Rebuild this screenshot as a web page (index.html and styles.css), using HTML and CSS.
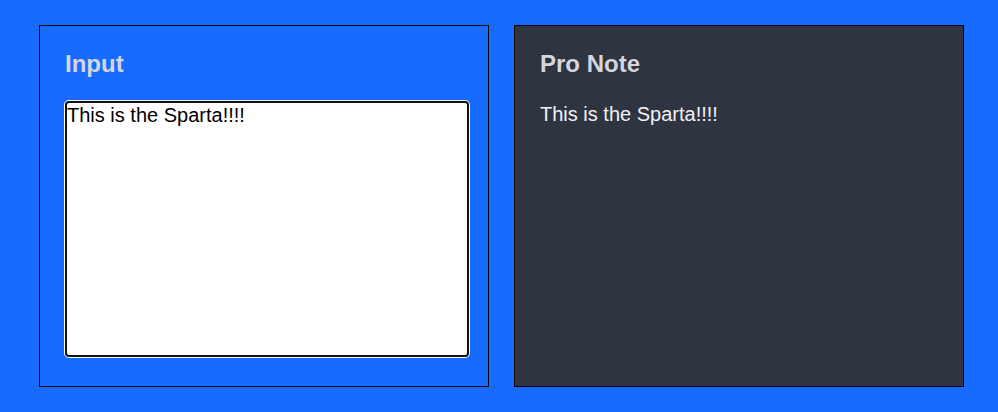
FILE: index.html
```html
<!DOCTYPE html>
<html lang="en">
<head>
<meta charset="utf-8">
<title>Pro Note</title>
<link rel="stylesheet" href="styles.css">
</head>
<body>
<main class="layout">
  <section class="panel panel-input">
    <h2 class="panel-title">Input</h2>
    <textarea class="editor" spellcheck="false">This is the Sparta!!!!</textarea>
  </section>
  <section class="panel panel-output">
    <h2 class="panel-title">Pro Note</h2>
    <p class="note-text">This is the Sparta!!!!</p>
  </section>
</main>
</body>
</html>
```
FILE: styles.css
```css
* { box-sizing: border-box; }
html, body {
  margin: 0;
  height: 100%;
}
body {
  background: #176cff;
  font-family: "Liberation Sans", Arial, sans-serif;
  overflow: hidden;
}
.layout {
  display: grid;
  grid-template-columns: 450px 450px;
  column-gap: 25px;
  padding: 25px 0 25px 39px;
  height: 412px;
}
.panel {
  border: 1px solid #000;
  padding: 24px 24px 24px 25px;
  display: flex;
  flex-direction: column;
  align-items: flex-start;
}
.panel-input { background: #176cff; }
.panel-output { background: #2e3440; }
.panel-title {
  margin: 0 0 23px;
  font-size: 24px;
  font-weight: bold;
  line-height: 27.6px;
  color: #d3d6dd;
}
.editor {
  margin: 0;
  width: 404px;
  height: 256px;
  border: 2px solid #111;
  border-radius: 4px;
  box-shadow: 0 0 0 1px #fff;
  background: #fff;
  padding: 1px 0 0;
  font-family: "Liberation Sans", Arial, sans-serif;
  font-size: 20px;
  line-height: 23px;
  color: #000;
  resize: none;
  outline: none;
}
.note-text {
  margin: 2px 0 0;
  font-size: 20px;
  line-height: 23px;
  color: #f0f2f5;
}
```
